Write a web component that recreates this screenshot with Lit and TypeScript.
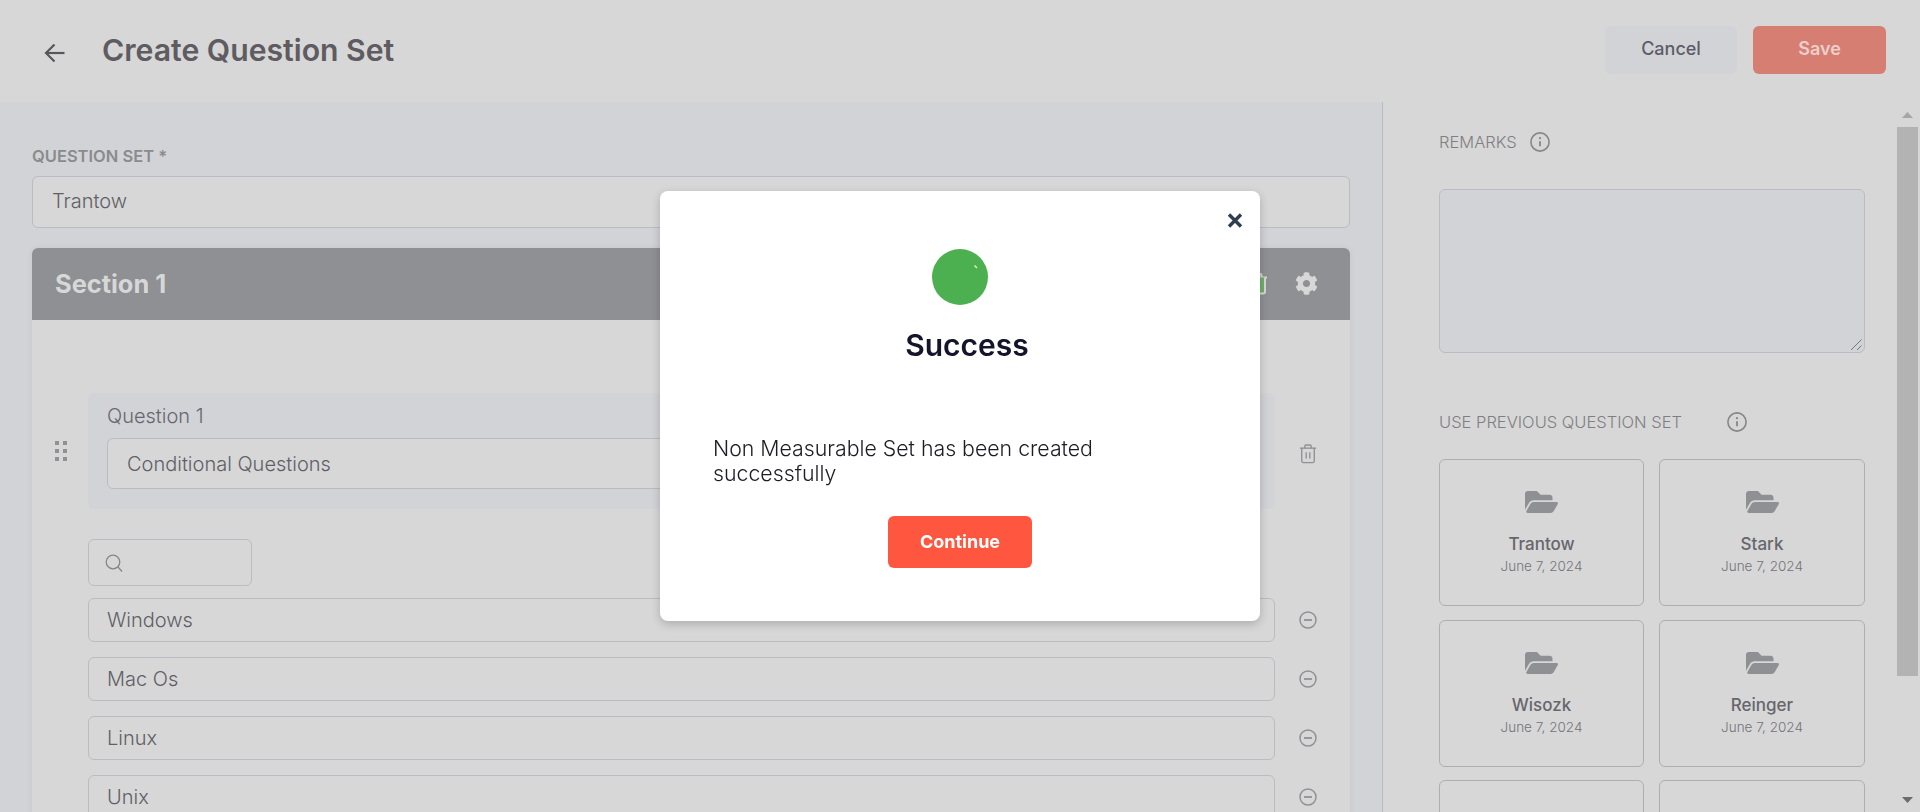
import {LitElement, html, css, svg} from 'lit';
import {customElement} from 'lit/decorators.js';

const cogPath = 'M487.4 315.7l-42.6-24.6c4.3-23.2 4.3-47 0-70.2l42.6-24.6c4.9-2.8 7.1-8.6 5.5-14-11.1-35.6-30-67.8-54.7-94.6-3.8-4.1-10-5.1-14.8-2.3L380.8 110c-17.9-15.4-38.5-27.3-60.8-35.1V25.8c0-5.6-3.9-10.5-9.4-11.7-36.7-8.2-74.3-7.8-109.2 0-5.5 1.2-9.4 6.1-9.4 11.7V75c-22.2 7.9-42.8 19.8-60.8 35.1L88.7 85.5c-4.9-2.8-11-1.9-14.8 2.3-24.7 26.7-43.6 58.9-54.7 94.6-1.7 5.4.6 11.2 5.5 14L67.3 221c-4.3 23.2-4.3 47 0 70.2l-42.6 24.6c-4.9 2.8-7.1 8.6-5.5 14 11.1 35.6 30 67.8 54.7 94.6 3.8 4.1 10 5.1 14.8 2.3l42.6-24.6c17.9 15.4 38.5 27.3 60.8 35.1v49.2c0 5.6 3.9 10.5 9.4 11.7 36.7 8.2 74.3 7.8 109.2 0 5.5-1.2 9.4-6.1 9.4-11.7v-49.2c22.2-7.9 42.8-19.8 60.8-35.1l42.6 24.6c4.9 2.8 11 1.9 14.8-2.3 24.7-26.7 43.6-58.9 54.7-94.6 1.5-5.5-.7-11.3-5.6-14.1zM256 336c-44.1 0-80-35.9-80-80s35.9-80 80-80 80 35.9 80 80-35.9 80-80 80z';
const folderPath = 'M572.694 292.093L500.27 416.248A63.997 63.997 0 0 1 444.989 448H45.025c-18.523 0-30.064-20.093-20.731-36.093l72.424-124.155A64 64 0 0 1 152 256h399.964c18.523 0 30.064 20.093 20.73 36.093zM152 224h328v-48c0-26.51-21.49-48-48-48H272l-64-64H48C21.49 64 0 85.49 0 112v278.046l69.077-118.418C86.214 242.25 117.989 224 152 224z';

const infoIcon = html`<svg class="info" viewBox="0 0 20 20" fill="none" stroke="#87878a" stroke-width="1.6">
  <circle cx="10" cy="10" r="9.1"></circle>
  <path d="M10 9.2v5" stroke-width="1.8"></path>
  <circle cx="10" cy="6.2" r="1.1" fill="#87878a" stroke="none"></circle>
</svg>`;

const trashLines = svg`
  <path d="M1 4.5h18"></path>
  <path d="M6.5 4.5V2.2c0-.6.5-1.2 1.2-1.2h4.6c.7 0 1.2.6 1.2 1.2v2.3"></path>
  <path d="M3 4.5v14c0 1.1.8 2 1.8 2h10.4c1 0 1.8-.9 1.8-2v-14"></path>
`;

const minusIcon = html`<svg class="row-icon" viewBox="0 0 18 18" fill="none" stroke="#909196" stroke-width="1.5">
  <circle cx="9" cy="9" r="8"></circle>
  <path d="M5 9h8" stroke-width="1.8"></path>
</svg>`;

const previousSets = ['Trantow', 'Stark', 'Wisozk', 'Reinger', '', ''];
const optionNames = ['Windows', 'Mac Os', 'Linux', 'Unix'];

@customElement('app-root')
class AppRoot extends LitElement {
  static styles = css`
  :host {
    display: flex;
    flex-direction: column;
    height: 812px;
    overflow: hidden;
    background: #d7d7d7;
    font-family: Inter, "Liberation Sans", sans-serif;
    color: #5f5f66;
  }
  * {
    box-sizing: border-box;
  }
  .header {
    flex: none;
    height: 102px;
    display: flex;
    align-items: center;
    padding: 0 34px 2px 44px;
  }
  .back {
    width: 21px;
    height: 20px;
    margin-right: 37px;
    margin-top: 5px;
  }
  .title {
    flex: 1;
    margin: 0;
    font-size: 30.2px;
    font-weight: 600;
    color: #5e5b61;
  }
  .btn {
    height: 48px;
    width: 133px;
    padding-bottom: 3px;
    display: flex;
    align-items: center;
    justify-content: center;
    border-radius: 6px;
    font-size: 18px;
    font-weight: 600;
  }
  .cancel {
    width: 132px;
    margin-right: 16px;
    background: #d2d3d7;
    color: #5c5d68;
    font-weight: 500;
  }
  .save {
    background: #d77e73;
    color: #eccfcb;
  }
  .main {
    flex: 1;
    min-height: 0;
    display: flex;
  }
  .left {
    flex: none;
    width: 1382px;
    padding: 45px 32px 0 32px;
    background: #d2d3d7;
    overflow: hidden;
  }
  .set-label {
    font-size: 16.5px;
    line-height: 18px;
    font-weight: 600;
    color: #8a8b8c;
    margin-bottom: 11px;
  }
  .field {
    display: flex;
    align-items: center;
    background: #d7d7d7;
    border: 1px solid #babcc4;
    border-radius: 6px;
    font-size: 20px;
    font-weight: 300;
    color: #605f66;
  }
  .set-name {
    height: 52px;
    padding: 0 0 3px 19px;
    margin-bottom: 20px;
  }
  .section {
    height: 600px;
    background: #d7d7d7;
    border-radius: 6px 6px 0 0;
    box-shadow: 0 0 6px rgba(0, 0, 0, 0.06);
  }
  .section-head {
    height: 72px;
    display: flex;
    align-items: center;
    justify-content: flex-end;
    padding: 0 32px 0 23px;
    background: #8e9094;
    border-radius: 6px 6px 0 0;
    color: #d7d7d7;
  }
  .section-title {
    flex: 1;
    padding-bottom: 2px;
    font-size: 25.4px;
    font-weight: 700;
  }
  .head-trash {
    width: 20px;
    height: 22px;
    margin: 0 27px 1px 0;
  }
  .gear {
    width: 23px;
    height: 23px;
    margin-bottom: 2px;
  }
  .section-body {
    padding: 73px 0 0 23px;
  }
  .row {
    display: flex;
    align-items: center;
  }
  .drag {
    flex: none;
    width: 33px;
    display: grid;
    grid-template-columns: 4px 4px;
    grid-auto-rows: 4px;
    gap: 4px;
  }
  .drag span {
    background: #909196;
  }
  .question {
    flex: none;
    width: 1187px;
    height: 116px;
    padding: 12px 18px 0 19px;
    background: #d2d3d7;
    border-radius: 6px;
  }
  .question-label {
    font-size: 20px;
    line-height: 22px;
    font-weight: 300;
    color: #66676d;
    margin-bottom: 11px;
  }
  .question .field {
    height: 51px;
    padding-left: 19px;
  }
  .row-icon {
    flex: none;
    width: 18px;
    height: 18px;
    margin-left: 24px;
  }
  .trash {
    height: 20px;
    margin-top: 6px;
  }
  .options {
    margin-left: 33px;
  }
  .search {
    width: 164px;
    height: 47px;
    margin: 30px 0 12px;
    padding-left: 16px;
  }
  .search svg {
    width: 18px;
    height: 18px;
  }
  .option {
    flex: none;
    width: 1187px;
    height: 44px;
    padding-left: 18px;
  }
  .options .row {
    margin-bottom: 15px;
  }
  .right {
    flex: 1;
    min-width: 0;
    padding: 29px 30px 0 56px;
    border-left: 1px solid #babcc4;
    overflow: hidden;
  }
  .right-label {
    display: flex;
    align-items: center;
    height: 22px;
    font-size: 16.5px;
    font-weight: 300;
    color: #7f7f82;
  }
  .info {
    width: 20px;
    height: 20px;
    margin-left: 13px;
  }
  .remarks {
    height: 164px;
    margin: 36px 0 58px;
    background: #d2d3d7;
    border: 1px solid #babcc4;
    border-radius: 6px;
    display: flex;
    align-items: flex-end;
    justify-content: flex-end;
  }
  .grip {
    width: 12px;
    height: 12px;
    margin: 0 2px 2px 0;
  }
  .wide-info {
    display: flex;
    margin-left: 32px;
  }
  .cards {
    margin-top: 26px;
    display: grid;
    grid-template-columns: 205px 206px;
    grid-auto-rows: 147px;
    gap: 13.5px 15px;
  }
  .card {
    display: flex;
    flex-direction: column;
    align-items: center;
    padding-top: 31px;
    border: 1px solid #aeaeb0;
    border-radius: 6px;
  }
  .folder {
    width: 33px;
    height: 22px;
    margin-bottom: 19px;
  }
  .card-name {
    font-size: 17px;
    line-height: 24px;
    font-weight: 500;
    color: #66666d;
  }
  .card-date {
    font-size: 13.5px;
    line-height: 20px;
    font-weight: 300;
    color: #747479;
  }
  .scrollbar {
    flex: none;
    width: 25px;
    padding: 0 2px;
    display: flex;
    flex-direction: column;
    align-items: stretch;
  }
  .arrow {
    flex: none;
    height: 25px;
    display: flex;
    align-items: center;
    justify-content: center;
  }
  .arrow svg {
    width: 11px;
    height: 6px;
  }
  .thumb {
    flex: none;
    height: 549px;
    background: #b3b3b3;
  }
  .track {
    flex: 1;
  }
  .overlay {
    position: fixed;
    inset: 0;
    display: flex;
    align-items: center;
    justify-content: center;
  }
  .modal {
    position: relative;
    width: 600px;
    height: 430px;
    padding-top: 58px;
    display: flex;
    flex-direction: column;
    align-items: center;
    background: #fff;
    border-radius: 8px;
    box-shadow: 0 3px 10px rgba(0, 0, 0, 0.2);
  }
  .close {
    position: absolute;
    top: 22px;
    right: 17px;
    width: 16px;
    height: 15px;
  }
  .tick {
    width: 56px;
    height: 56px;
  }
  .modal-title {
    margin: 23px 0 0 14px;
    font-size: 30px;
    line-height: 34px;
    font-weight: 600;
    color: #14142b;
  }
  .message {
    align-self: flex-start;
    width: 480px;
    margin: 74px 0 30px 53px;
    font-size: 21.3px;
    line-height: 25px;
    font-weight: 300;
    color: #1c1c24;
  }
  .continue {
    width: 144px;
    height: 52px;
    padding-bottom: 1px;
    display: flex;
    align-items: center;
    justify-content: center;
    border-radius: 6px;
    background: #ff5640;
    color: #fff;
    font-size: 18px;
    font-weight: 700;
  }
  `;

  render() {
    return html`
    <div class="header">
      <svg class="back" viewBox="0 0 21 20" fill="none" stroke="#57565a" stroke-width="2.2">
        <path d="M20.5 10H2"></path>
        <path d="M10.5 1.5L2 10l8.5 8.5"></path>
      </svg>
      <h1 class="title">Create Question Set</h1>
      <div class="btn cancel">Cancel</div>
      <div class="btn save">Save</div>
    </div>
    <div class="main">
      <div class="left">
        <div class="set-label">QUESTION SET *</div>
        <div class="field set-name">Trantow</div>
        <div class="section">
          <div class="section-head">
            <div class="section-title">Section 1</div>
            <svg class="head-trash" viewBox="0 0 20 22" fill="#72ad6f" stroke="#d7d7d7" stroke-width="2">${trashLines}</svg>
            <svg class="gear" viewBox="0 0 512 512" fill="#d7d7d7"><path d="${cogPath}"></path></svg>
          </div>
          <div class="section-body">
            <div class="row">
              <div class="drag">${[0, 1, 2, 3, 4, 5].map(() => html`<span></span>`)}</div>
              <div class="question">
                <div class="question-label">Question 1</div>
                <div class="field">Conditional Questions</div>
              </div>
              <svg class="row-icon trash" viewBox="0 0 20 22" fill="none" stroke="#909196" stroke-width="1.5">
                ${trashLines}
                <path d="M8 9v7M12 9v7"></path>
              </svg>
            </div>
            <div class="options">
              <div class="field search">
                <svg viewBox="0 0 18 18" fill="none" stroke="#87878a" stroke-width="1.3">
                  <circle cx="8" cy="8" r="6.8"></circle>
                  <path d="M13 13l4 4.5"></path>
                </svg>
              </div>
              ${optionNames.map(
                (name) => html`
                  <div class="row">
                    <div class="field option">${name}</div>
                    ${minusIcon}
                  </div>
                `
              )}
            </div>
          </div>
        </div>
      </div>
      <div class="right">
        <div class="right-label">REMARKS ${infoIcon}</div>
        <div class="remarks">
          <svg class="grip" viewBox="0 0 12 12" fill="none" stroke="#77777b" stroke-width="1">
            <path d="M1 12L11.5 1.5M7 12l4.5-4.5"></path>
          </svg>
        </div>
        <div class="right-label">USE PREVIOUS QUESTION SET <span class="wide-info">${infoIcon}</span></div>
        <div class="cards">
          ${previousSets.map(
            (name) => html`
              <div class="card">
                ${name
                  ? html`
                      <svg class="folder" viewBox="0 64 576 384" fill="#8e9094"><path d="${folderPath}"></path></svg>
                      <div class="card-name">${name}</div>
                      <div class="card-date">June 7, 2024</div>
                    `
                  : ''}
              </div>
            `
          )}
        </div>
      </div>
      <div class="scrollbar">
        <div class="arrow"><svg viewBox="0 0 11 6" fill="#a6a6a6"><path d="M5.5 0L11 6H0z"></path></svg></div>
        <div class="thumb"></div>
        <div class="track"></div>
        <div class="arrow"><svg viewBox="0 0 11 6" fill="#6c6c6c"><path d="M0 0h11L5.5 6z"></path></svg></div>
      </div>
    </div>
    <div class="overlay">
      <div class="modal">
        <svg class="close" viewBox="0 0 16 15" fill="none" stroke="#2c3e50" stroke-width="3.4">
          <path d="M2 1.5l12 12M14 1.5l-12 12"></path>
        </svg>
        <svg class="tick" viewBox="0 0 56 56">
          <circle cx="28" cy="28" r="28" fill="#4caf50"></circle>
          <path d="M42.5 16.5l2.5 2.5" stroke="#d7f59a" stroke-width="1.6" fill="none"></path>
        </svg>
        <div class="modal-title">Success</div>
        <div class="message">Non Measurable Set has been created successfully</div>
        <div class="continue">Continue</div>
      </div>
    </div>
    `;
  }
}
